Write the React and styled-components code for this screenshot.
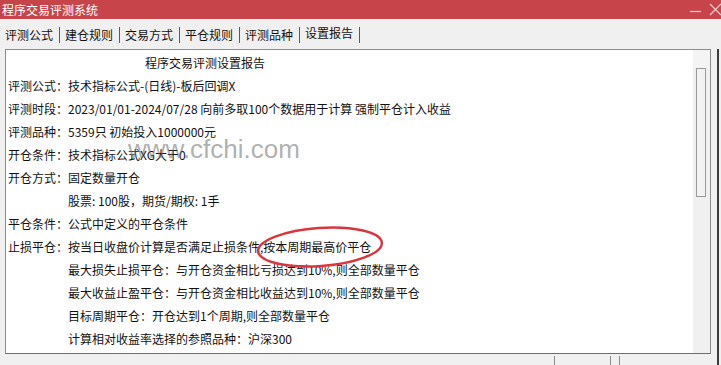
import React from "react";
import styled, { createGlobalStyle } from "styled-components";

const GlobalStyle = createGlobalStyle`
  html, body {
    margin: 0;
    padding: 0;
    background: #f0f0f0;
    overflow: hidden;
  }
`;

const cjk = `"Noto Sans CJK SC", "Noto Sans", sans-serif`;

const Window = styled.div`
  position: relative;
  width: 721px;
  height: 365px;
  display: flex;
  flex-flow: column;
  background: #f0f0f0;
  font-family: ${cjk};
  color: #111;
  overflow: hidden;
`;

const TitleBar = styled.header`
  flex: 0 0 19px;
  display: flex;
  align-items: center;
  justify-content: space-between;
  background: #c8444b;
  padding-left: 2px;
  overflow: hidden;
`;

const TitleText = styled.span`
  color: #fff;
  font-size: 12px;
  line-height: 19px;
`;

const TitleButtons = styled.div`
  display: flex;
  align-items: center;
  gap: 8px;
  margin-right: -2px;
  flex-shrink: 0;
`;

const TabBar = styled.nav`
  flex: 0 0 30px;
  display: flex;
  align-items: flex-end;
  padding-bottom: 6px;
  box-sizing: border-box;
`;

const Tab = styled.div`
  width: 60px;
  box-sizing: border-box;
  padding: 0 6px 0 5px;
  height: 16px;
  font-size: 12px;
  line-height: ${(p) => (p.$active ? "12px" : "16px")};
  border-right: 1px solid #5a5a5a;
  white-space: nowrap;
  color: #111;
`;

const Body = styled.section`
  flex: 1;
  display: flex;
  padding: 0 2px 0 5px;
  box-sizing: border-box;
  min-height: 0;
`;

const Column = styled.div`
  flex: 1;
  display: flex;
  flex-flow: column;
`;

const Panel = styled.div`
  flex: 0 0 305px;
  display: flex;
  border: 1px solid #8c8c8c;
  border-bottom-color: #6e6e6e;
  background: #fff;
  box-sizing: border-box;
`;

const Report = styled.div`
  flex: 1;
  padding: 1px 0 0 2px;
  font-size: 12px;
  line-height: 23px;
`;

const Heading = styled.div`
  padding-left: 137px;
`;

const Line = styled.div`
  display: flex;
  white-space: nowrap;
  padding-left: ${(p) => (p.$indent ? "60px" : "0")};
`;

const Label = styled.span`
  width: 60px;
  flex: 0 0 60px;
`;

const ScrollBar = styled.div`
  flex: 0 0 17px;
  display: flex;
  flex-flow: column;
  background: #f0f0f0;
`;

const ScrollButton = styled.div`
  flex: 0 0 18px;
  background: #f4f4f4;
`;

const Thumb = styled.div`
  height: 127px;
  margin: 0 4px 0 3px;
  border: 1px solid #9a9a9a;
  background: #f2f2f2;
`;

const Edge = styled.div`
  flex: 0 0 2px;
  margin-left: 6px;
  background: #3c3c3c;
`;

const StatusBar = styled.footer`
  flex: 1;
  display: flex;
  padding-top: 2px;
`;

const StatusCell = styled.div`
  width: ${(p) => p.$w}px;
  border-right: ${(p) => (p.$line ? "1px solid #8a8a8a" : "none")};
`;

const Watermark = styled.div`
  position: absolute;
  left: 128px;
  top: 134px;
  font-family: "Liberation Sans", Arial, sans-serif;
  font-size: 26px;
  color: rgba(110, 110, 110, 0.55);
  pointer-events: none;
`;

const Mark = styled.svg`
  position: absolute;
  left: 250px;
  top: 222px;
  pointer-events: none;
`;

const rows = [
  ["评测公式：", "技术指标公式-(日线)-板后回调X"],
  ["评测时段：", "2023/01/01-2024/07/28 向前多取100个数据用于计算 强制平仓计入收益"],
  ["评测品种：", "5359只 初始投入1000000元"],
  ["开仓条件：", "技术指标公式XG大于0"],
  ["开仓方式：", "固定数量开仓"],
  [null, "股票: 100股，期货/期权: 1手"],
  ["平仓条件：", "公式中定义的平仓条件"],
  ["止损平仓：", "按当日收盘价计算是否满足止损条件,按本周期最高价平仓"],
  [null, "最大损失止损平仓：与开仓资金相比亏损达到10%,则全部数量平仓"],
  [null, "最大收益止盈平仓：与开仓资金相比收益达到10%,则全部数量平仓"],
  [null, "目标周期平仓：开仓达到1个周期,则全部数量平仓"],
  [null, "计算相对收益率选择的参照品种：沪深300"],
];

const tabs = ["评测公式", "建仓规则", "交易方式", "平仓规则", "评测品种", "设置报告"];

export default function App() {
  return (
    <>
      <GlobalStyle />
      <Window>
        <TitleBar>
          <TitleText>程序交易评测系统</TitleText>
          <TitleButtons>
            <svg width="11" height="14" viewBox="0 0 11 14">
              <line x1="0" y1="8.5" x2="11" y2="8.5" stroke="#f6cdd0" strokeWidth="1.2" />
            </svg>
            <svg width="14" height="14" viewBox="0 0 14 14">
              <path d="M1 1 L12 12 M12 1 L1 12" stroke="#f6cdd0" strokeWidth="1.2" />
            </svg>
          </TitleButtons>
        </TitleBar>
        <TabBar>
          {tabs.map((t, i) => (
            <Tab key={t} $active={i === tabs.length - 1}>
              {t}
            </Tab>
          ))}
        </TabBar>
        <Body>
          <Column>
            <Panel>
              <Report>
                <Heading>程序交易评测设置报告</Heading>
                {rows.map(([label, value], i) => (
                  <Line key={i} $indent={!label}>
                    {label && <Label>{label}</Label>}
                    <span>{value}</span>
                  </Line>
                ))}
              </Report>
              <ScrollBar>
                <ScrollButton />
                <Thumb />
              </ScrollBar>
            </Panel>
            <StatusBar>
              <StatusCell $w={549} $line />
              <StatusCell $w={55} $line />
              <StatusCell $w={8} $line />
            </StatusBar>
          </Column>
          <Edge />
        </Body>
        <Watermark>www.cfchi.com</Watermark>
        <Mark width="140" height="52" viewBox="0 0 140 52">
          <ellipse
            cx="70"
            cy="25"
            rx="62"
            ry="19"
            transform="rotate(-4 70 25)"
            fill="none"
            stroke="#d9363e"
            strokeWidth="2.5"
          />
        </Mark>
      </Window>
    </>
  );
}
